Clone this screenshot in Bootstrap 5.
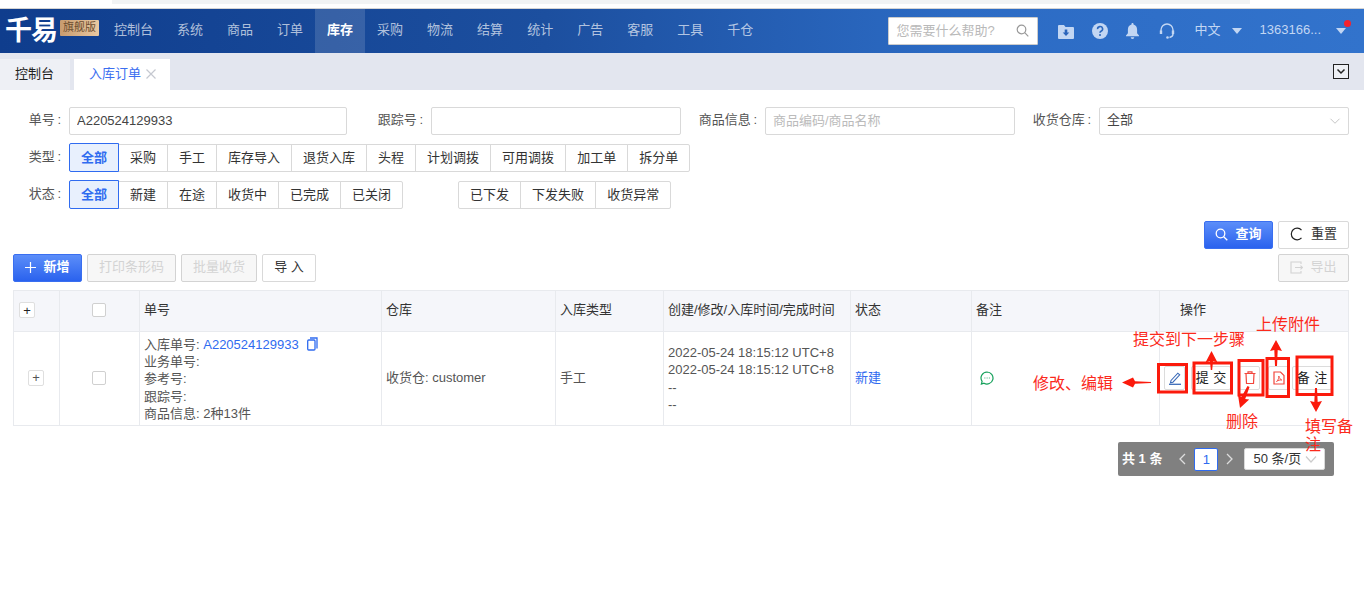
<!DOCTYPE html>
<html lang="zh-CN">
<head>
<meta charset="utf-8">
<title>入库订单</title>
<link rel="stylesheet" href="https://cdn.jsdelivr.net/npm/bootstrap@5.3.0/dist/css/bootstrap.min.css">
<style>
html,body{height:100%}
body{font-family:"Liberation Sans","Noto Sans CJK SC",sans-serif;font-size:13px;color:#333;background:#fff;overflow:hidden;position:relative}
.strip{height:9px;border-bottom:1px solid #d4d4d4;background:#fff}
.strip-in{height:4px;margin:0 114px 0 112px;background:#f1f3f4}
.topbar{height:44px;background:linear-gradient(90deg,#0f3d8d 0%,#1c4f9f 40%,#2c6bc4 70%,#3273cc 100%);padding:0}
.brand{width:102px;height:44px;position:relative;flex:none;color:#fff}
.brand-name{position:absolute;left:5px;top:4px;font-size:27px;line-height:36px;font-weight:700;letter-spacing:-1px}
.brand-tag{position:absolute;left:60px;top:11px;width:39px;height:16px;background:linear-gradient(90deg,#c79b6f,#e9c9a2);color:#6c4d2f;font-size:11px;line-height:15px;text-align:center;border-radius:1px}
.menu-link{display:block;height:44px;line-height:42px;padding:0 12px;color:rgba(255,255,255,.68);font-size:13px;text-decoration:none}
.menu-link.on{background:rgba(255,255,255,.14);color:#fff;font-weight:700}
.search-box{width:150px;height:28px;background:#fff;border:1px solid #ccc;border-radius:1px;color:#b9b9b9;padding:0 8px 1px;line-height:26px}
.search-box svg{display:block}
.tool-ico{color:#c2d6f3;display:block;margin-left:18px}
.tool-ico.wide{margin-left:20px}
.top-txt{color:#c2d6f3;font-size:13px;padding-bottom:2px;margin-left:20px}
.top-txt.user{margin-left:18px}
.caret-d{width:0;height:0;margin-left:11px;border-left:5px solid transparent;border-right:5px solid transparent;border-top:6px solid #c2d6f3}
.caret-d.last{margin-left:15px;margin-right:18px}
.red-dot{position:absolute;left:1344px;top:20px;width:7px;height:7px;background:#f5222d;border-radius:50%}
.tabbar{height:37px;background:#e3e6ef;padding-top:6px;position:relative}
.tab-item{height:31px;line-height:30px;padding:0 15px;background:#eef0f5;color:#222;width:70px}
.tab-item.cur{background:#fff;color:#3b6ef0;width:96px;margin-left:4px;white-space:nowrap}
.tab-x{margin-left:5px;vertical-align:-1px}
.collapse-btn{width:16px;height:15px;border:1.5px solid #222;margin:5px 15px 0 0;background:#eef0f5}
.main{padding:17px 15px 0 13px}
.lbl{text-align:right;color:#555;margin-right:8px;flex:none;line-height:26px;white-space:nowrap;word-spacing:-1px}
.lbl-a{width:48px}.lbl-b{width:76px}
.ipt{height:28px;border:1px solid #d9d9d9;border-radius:2px;font-size:13px;padding:0 7px 2px;color:#444;box-shadow:none;flex:none}
.ipt::placeholder{color:#bbb}
.ipt-a{width:278px}.ipt-b{width:250px}
.sel-g{--bs-form-select-bg-img:url("data:image/svg+xml,%3csvg xmlns='http://www.w3.org/2000/svg' viewBox='0 0 16 16'%3e%3cpath fill='none' stroke='%23c4c4c4' stroke-width='1.3' d='M2 5l6 6 6-6'/%3e%3c/svg%3e");background-size:12px 12px;background-position:right 7px center}
.row-f{margin-top:9px}
.fbtn{height:28px;line-height:23px;padding:0 11px 1px;border:1px solid #d9d9d9;border-radius:0;background:#fff;color:#333;font-size:13px;margin-left:-1px;white-space:nowrap;--bs-btn-hover-bg:#fff}
.fbtn:first-child{margin-left:0;border-radius:2px 0 0 2px}
.fbtn:last-child{border-radius:0 2px 2px 0}
.fbtn.sel{background:#e8f0fd;border-color:#2f6bf0;color:#2f6bf0;font-weight:700;position:relative;z-index:1;height:29px;margin-top:-1px;border-radius:2px}
.group-2{margin-left:55px}
.abtn{height:28px;line-height:26px;padding:0 0 2px;border:1px solid #d9d9d9;border-radius:2px;background:#fff;color:#333;font-size:13px;display:inline-flex;align-items:center;justify-content:center;gap:7px;white-space:nowrap}
.abtn.pri{background:linear-gradient(180deg,#5c8ef9,#2a62ee);border-color:#3a6ff0;color:#fff;font-weight:700}
.abtn.off{background:#f3f3f3;color:#bdbdbd}
.w69{width:69px}.w71{width:71px}.w89{width:89px}.w76{width:76px}.w54{width:54px}
.bar-1{margin-top:12px;gap:5px}
.bar-2{margin-top:5px;gap:5px}
.grid-t{width:1335px;table-layout:fixed;margin:8px 0 0;border-color:#e8eaee;--bs-table-border-color:#e8eaee;font-size:13px}
.grid-t>:not(caption)>*>*{padding:0 4px 2px;vertical-align:middle;border-width:1px;color:#555}
.grid-t thead th{height:41px;background:#f5f6fa;font-weight:400;color:#333;box-shadow:none}
.grid-t tbody td{height:94px;line-height:17.2px}
.grid-t>tbody>tr>td.multi{padding-bottom:0}
.grid-t>tbody>tr>td.multi-t{padding-bottom:0;padding-top:1px}
.c1{width:46px}.c2{width:80px}.c3{width:242px}.c4{width:174px}.c5{width:108px}.c6{width:187px}.c7{width:121px}.c8{width:188px}.c9{width:189px}
.plus-b{width:16px;height:16px;border:1px solid #dfdfdf;background:#fff;border-radius:2px;display:flex;align-items:center;justify-content:center;font-size:13px;line-height:1;color:#222}
.plus-h{margin-left:1px}
.plus-r{margin-left:10px;color:#555}
.chk{width:14px;height:14px;border:1px solid #d0d0d0;border-radius:2px;background:#fff;margin:0 0 0 28px}
.lnk{color:#2f6bf0;text-decoration:none}
.copy-ico{vertical-align:-2px}
.op-wrap{gap:6px;height:24px}
.op-b{height:24px;border:1px solid #dcdcdc;border-radius:2px;background:#fff;padding:0;display:flex;align-items:center;justify-content:center;color:#222;font-size:13px;flex:none;white-space:nowrap}
.op-i{width:21px}.op-t{width:40px;word-spacing:1px}
.op-sp{margin-left:2px}
.op-nt{margin-left:-3px}
.pager{width:216px;height:34px;background:#808080;margin:16px 15px 0 auto;color:#fff;padding:0 0 0 4px;border-radius:2px;font-size:13px}
.pg-total{font-weight:700;white-space:nowrap}
.pg-prev{margin-left:16px}
.pg-next{margin-left:8px}
.pg-num{width:24px;height:23px;margin-left:8px;background:#fff;border:1px solid #2f6bf0;border-radius:2px;color:#2f6bf0;text-align:center;line-height:21px;flex:none}
.pg-sel{width:81px;height:22px;margin-left:10px;background:#fff;border:1px solid #d9d9d9;border-radius:2px;color:#333;line-height:19px;padding-left:8px;position:relative;white-space:nowrap;flex:none}
.pg-sel svg{position:absolute;right:7px;top:6px}
.ann-layer{position:absolute;left:0;top:0;width:1364px;height:611px;pointer-events:none}
.ann{position:absolute;color:#fb2a1c;font-size:16px;line-height:18px;white-space:nowrap}
.ann-1{left:1133px;top:331px}
.ann-2{left:1256px;top:316px}
.ann-3{left:1033px;top:375px}
.ann-4{left:1226px;top:413px}
.ann-5{left:1305px;top:418px;white-space:normal;width:48px}
</style>
</head>
<body>
<div class="strip"><div class="strip-in"></div></div>

<nav class="topbar d-flex align-items-center">
  <div class="brand"><span class="brand-name">千易</span><span class="brand-tag">旗舰版</span></div>
  <ul class="nav flex-nowrap">
    <li class="nav-item"><a class="menu-link" href="#">控制台</a></li>
    <li class="nav-item"><a class="menu-link" href="#">系统</a></li>
    <li class="nav-item"><a class="menu-link" href="#">商品</a></li>
    <li class="nav-item"><a class="menu-link" href="#">订单</a></li>
    <li class="nav-item"><a class="menu-link on" href="#">库存</a></li>
    <li class="nav-item"><a class="menu-link" href="#">采购</a></li>
    <li class="nav-item"><a class="menu-link" href="#">物流</a></li>
    <li class="nav-item"><a class="menu-link" href="#">结算</a></li>
    <li class="nav-item"><a class="menu-link" href="#">统计</a></li>
    <li class="nav-item"><a class="menu-link" href="#">广告</a></li>
    <li class="nav-item"><a class="menu-link" href="#">客服</a></li>
    <li class="nav-item"><a class="menu-link" href="#">工具</a></li>
    <li class="nav-item"><a class="menu-link" href="#">千仓</a></li>
  </ul>
  <div class="search-box d-flex justify-content-between align-items-center ms-auto">
    <span>您需要什么帮助?</span>
    <svg width="13" height="13" viewBox="0 0 13 13" fill="none" stroke="#999" stroke-width="1.2"><circle cx="5.5" cy="5.5" r="4.3"/><path d="M8.7 8.7L12.3 12.3"/></svg>
  </div>
  <svg class="tool-ico wide" width="16" height="15" viewBox="0 0 16 15" fill="currentColor"><path d="M0 2a1 1 0 0 1 1-1h5l1.5 2H15a1 1 0 0 1 1 1v10a1 1 0 0 1-1 1H1a1 1 0 0 1-1-1z"/><path fill="#2a64bb" d="M6.7 5.5h2.6v3h2L8 12 4.700 8.500h2z"/></svg>
  <svg class="tool-ico" width="16" height="16" viewBox="0 0 16 16"><circle cx="8" cy="8" r="8" fill="currentColor"/><path d="M5.600 6.100A2.500 2.400 0 1 1 9 8.200c-.7.4-1 .8-1 1.600" fill="none" stroke="#2a66bd" stroke-width="1.600"/><circle cx="8" cy="12" r="1" fill="#2a66bd"/></svg>
  <svg class="tool-ico" width="13" height="16" viewBox="0 0 13 16" fill="currentColor"><path d="M6.500 0c.6 0 1 .4 1 1v.6c2.300.5 3.600 2.500 3.600 4.900v3.700L13 12.500v.8H0v-.8l1.900-2.300V6.500c0-2.400 1.300-4.400 3.600-4.900V1c0-.6.4-1 1-1zM4.700 14.200h3.600a1.800 1.800 0 0 1-3.600 0z"/></svg>
  <svg class="tool-ico wide" width="16" height="16" viewBox="0 0 16 16" fill="none" stroke="currentColor" stroke-width="1.400"><path d="M2 9V7a6 6 0 0 1 12 0v2"/><path d="M2 7.500v3.500M14 7.500v3.500" stroke-width="2.400"/><path d="M14 11c0 2-1.500 3-3.500 3.500"/><circle cx="8.500" cy="14.500" r="1.300" fill="currentColor" stroke="none"/></svg>
  <span class="top-txt">中文</span>
  <span class="caret-d"></span>
  <span class="top-txt user">1363166...</span>
  <span class="caret-d last"></span>
</nav>
<span class="red-dot"></span>

<div class="tabbar d-flex">
  <div class="tab-item">控制台</div>
  <div class="tab-item cur">入库订单<svg class="tab-x" width="10" height="10" viewBox="0 0 10 10" stroke="#c5c8d0" stroke-width="1.200"><path d="M.5.500l9 9M9.500.500l-9 9"/></svg></div>
  <div class="collapse-btn ms-auto d-flex align-items-center justify-content-center">
    <svg width="10" height="7" viewBox="0 0 10 7" fill="none" stroke="#222" stroke-width="1.500"><path d="M1.500 1.500L5 5l3.500-3.500"/></svg>
  </div>
</div>

<main class="main">
  <div class="d-flex">
    <span class="lbl lbl-a">单号 :</span><input class="form-control ipt ipt-a" value="A220524129933">
    <span class="lbl lbl-b">跟踪号 :</span><input class="form-control ipt ipt-b">
    <span class="lbl lbl-b">商品信息 :</span><input class="form-control ipt ipt-b" placeholder="商品编码/商品名称">
    <span class="lbl lbl-b">收货仓库 :</span><select class="form-select ipt ipt-b sel-g"><option>全部</option></select>
  </div>
  <div class="d-flex row-f">
    <span class="lbl lbl-a">类型 :</span>
    <div class="btn-group">
      <button class="btn fbtn sel">全部</button><button class="btn fbtn">采购</button><button class="btn fbtn">手工</button><button class="btn fbtn">库存导入</button><button class="btn fbtn">退货入库</button><button class="btn fbtn">头程</button><button class="btn fbtn">计划调拨</button><button class="btn fbtn">可用调拨</button><button class="btn fbtn">加工单</button><button class="btn fbtn">拆分单</button>
    </div>
  </div>
  <div class="d-flex row-f">
    <span class="lbl lbl-a">状态 :</span>
    <div class="btn-group">
      <button class="btn fbtn sel">全部</button><button class="btn fbtn">新建</button><button class="btn fbtn">在途</button><button class="btn fbtn">收货中</button><button class="btn fbtn">已完成</button><button class="btn fbtn">已关闭</button>
    </div>
    <div class="btn-group group-2">
      <button class="btn fbtn">已下发</button><button class="btn fbtn">下发失败</button><button class="btn fbtn">收货异常</button>
    </div>
  </div>
  <div class="d-flex justify-content-end bar-1">
    <button class="btn abtn pri w69"><svg width="13" height="13" viewBox="0 0 13 13" fill="none" stroke="#fff" stroke-width="1.300"><circle cx="5.500" cy="5.500" r="4.300"/><path d="M8.700 8.700L12.300 12.300"/></svg>查询</button>
    <button class="btn abtn w71"><svg width="14" height="14" viewBox="0 0 14 14" fill="none" stroke="#222" stroke-width="1.200"><path d="M11.500 3.200A5.800 5.800 0 1 0 11.500 10.800"/></svg>重置</button>
  </div>
  <div class="d-flex bar-2">
    <button class="btn abtn pri w69"><svg width="11" height="11" viewBox="0 0 11 11" stroke="#fff" stroke-width="1.200"><path d="M5.500 0v11M0 5.500h11"/></svg>新增</button>
    <button class="btn abtn off w89" disabled>打印条形码</button>
    <button class="btn abtn off w76" disabled>批量收货</button>
    <button class="btn abtn w54">导 入</button>
    <button class="btn abtn off w71 ms-auto" disabled><svg width="13" height="13" viewBox="0 0 13 13" fill="none" stroke="#bbb" stroke-width="1.100"><path d="M11 3V1H1v11h10v-2"/><path d="M5 6.500h7.500M10.500 4.700l2 1.800-2 1.800"/></svg>导出</button>
  </div>

  <table class="table table-bordered grid-t">
    <colgroup><col class="c1"><col class="c2"><col class="c3"><col class="c4"><col class="c5"><col class="c6"><col class="c7"><col class="c8"><col class="c9"></colgroup>
    <thead>
      <tr>
        <th><span class="plus-b plus-h">+</span></th>
        <th><div class="chk"></div></th>
        <th>单号</th><th>仓库</th><th>入库类型</th><th>创建/修改/入库时间/完成时间</th><th>状态</th><th>备注</th>
        <th><span class="ms-3">操作</span></th>
      </tr>
    </thead>
    <tbody>
      <tr>
        <td><span class="plus-b plus-r">+</span></td>
        <td><div class="chk"></div></td>
        <td class="multi-t">入库单号: <a class="lnk" href="#">A220524129933</a>
          <svg class="ms-1 copy-ico" width="12" height="14" viewBox="0 0 12 14" fill="none" stroke="#2f6bf0" stroke-width="1.300"><path d="M4 1h7v10.500"/><rect x="1.700" y="3" width="7.300" height="10" rx="1"/></svg><br>业务单号:<br>参考号:<br>跟踪号:<br>商品信息: 2种13件</td>
        <td>收货仓: customer</td>
        <td>手工</td>
        <td class="multi">2022-05-24 18:15:12 UTC+8<br>2022-05-24 18:15:12 UTC+8<br>--<br>--</td>
        <td><a class="lnk" href="#">新建</a></td>
        <td><svg class="ms-1" width="14" height="14" viewBox="0 0 14 14" fill="none" stroke="#14a05a" stroke-width="1.200"><path d="M7 1a6 6 0 1 1-3 11.200L1.400 13l.7-2.600A6 6 0 0 1 7 1z"/><path d="M4.500 7h.8M6.700 7h.8M8.900 7h.8"/></svg></td>
        <td>
          <div class="d-flex op-wrap">
            <button class="op-b op-i"><svg width="14" height="14" viewBox="0 0 14 14" fill="none" stroke="#3c6bb8" stroke-width="1.100"><path d="M3 9.500L9.800 2.200l1.900 1.700-6.800 7.300-2.400.6z"/><path d="M1 13.300h12" stroke-width="1.300"/></svg></button>
            <button class="op-b op-t">提 交</button>
            <button class="op-b op-i op-sp"><svg width="12" height="13" viewBox="0 0 12 13" fill="none" stroke="#f2463c" stroke-width="1.200"><path d="M.5 2.500h11M4 2.500V.8h4v1.700M2 2.500l.5 10h7l.5-10"/></svg></button>
            <button class="op-b op-i op-sp"><svg width="12" height="14" viewBox="0 0 12 14" fill="none" stroke="#f2463c" stroke-width="1.200"><path d="M1 1h6.500L11 4.500V13H1z"/><path d="M3.500 10.500C5.500 9 6 6.500 5.800 5c.6 2.500 1.500 3.300 3 4-2-.2-3.500.3-5.300 1.500z" stroke-width=".9"/></svg></button>
            <button class="op-b op-t op-nt">备 注</button>
          </div>
        </td>
      </tr>
    </tbody>
  </table>

  <div class="pager d-flex align-items-center">
    <span class="pg-total">共 1 条</span>
    <svg class="pg-prev" width="8" height="12" viewBox="0 0 8 12" fill="none" stroke="#ddd" stroke-width="1.300"><path d="M7 1L2 6l5 5"/></svg>
    <span class="pg-num">1</span>
    <svg class="pg-next" width="8" height="12" viewBox="0 0 8 12" fill="none" stroke="#ddd" stroke-width="1.300"><path d="M1 1l5 5-5 5"/></svg>
    <span class="pg-sel">50 条/页<svg width="12" height="9" viewBox="0 0 12 9" fill="none" stroke="#ccc" stroke-width="1.200"><path d="M1 1.500l5 5.500 5-5.500"/></svg></span>
  </div>
</main>

<div class="ann-layer">
  <svg width="1364" height="611" viewBox="0 0 1364 611" class="position-absolute top-0 start-0">
    <g fill="none" stroke="#fb1a0c" stroke-width="3">
      <rect x="1158.500" y="364.500" width="28" height="27.500"/>
      <rect x="1194" y="363" width="37.500" height="30"/>
      <rect x="1239" y="360.500" width="24" height="34.500"/>
      <rect x="1267" y="358.500" width="21.500" height="38"/>
      <rect x="1297" y="357" width="35" height="37.500"/>
    </g>
    <g fill="#fb1a0c">
      <path d="M1122 382.500l11-5 2 3.800 16 .7v1l-16 .7-2 3.800z"/>
      <path d="M1211.500 351l6 11.500-4.500-1.500-.8 9h-1.400l-.8-9-4.500 1.500z"/>
      <path d="M1240 408l-2-13 3.500 2 6-11 2 1-4.300 12 4 .5z"/>
      <path d="M1276 340l6 11-4.300-1-.7 16h-2l-.7-16-4.300 1z"/>
      <path d="M1316 412l-6-11 4.300 1 .7-14h2l.7 14 4.300-1z"/>
    </g>
  </svg>
  <span class="ann ann-1">提交到下一步骤</span>
  <span class="ann ann-2">上传附件</span>
  <span class="ann ann-3">修改、编辑</span>
  <span class="ann ann-4">删除</span>
  <span class="ann ann-5">填写备注</span>
</div>

<script src="https://cdn.jsdelivr.net/npm/bootstrap@5.3.0/dist/js/bootstrap.bundle.min.js"></script>
</body>
</html>
